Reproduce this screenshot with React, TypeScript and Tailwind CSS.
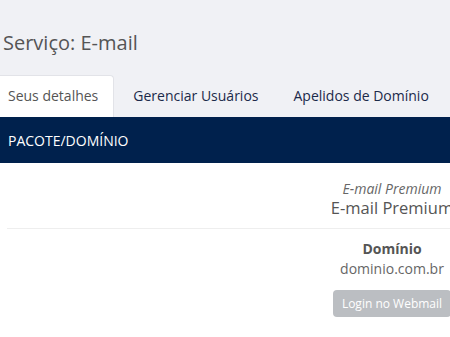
const tabs = ["Seus detalhes", "Gerenciar Usuários", "Apelidos de Domínio"];

export default function App() {
  return (
    <div className="w-[450px] h-[337px] overflow-hidden bg-white font-['Open_Sans',sans-serif]">
      <div className="w-[820px]">
        <div className="bg-[#f0f1f5] pt-[29px]">
          <h1 className="pl-[3px] text-[20px] leading-[28px] text-[#555]">
            Serviço: E-mail
          </h1>
          <ul className="mt-[18px] flex -ml-[7px] text-[14px] leading-[20px]">
            {tabs.map((t, i) => (
              <li
                key={t}
                className={
                  i === 0
                    ? "px-[15px] pt-[10px] pb-[11px] bg-white text-[#555] border-t border-r border-[#e2e3e8] rounded-tr-[4px] mr-[4px]"
                    : "px-[15px] py-[11px] text-[#1b2a4a] mr-[5px]"
                }
              >
                {t}
              </li>
            ))}
          </ul>
        </div>
        <div className="h-[46px] bg-[#00214d] flex items-center pl-[8px] text-white text-[14px]">
          PACOTE/DOMÍNIO
        </div>
        <div className="ml-[7px] pt-[17px]">
          <div className="grid grid-cols-[265px_240px] pb-[10px] border-b border-[#eeeeee]">
            <div />
            <div className="text-center text-[#666]">
              <p className="italic text-[14px] leading-[18px]">E-mail Premium</p>
              <p className="text-[16.5px] leading-[20px] text-[#555] whitespace-nowrap">E-mail Premium</p>
            </div>
          </div>
          <div className="grid grid-cols-[265px_240px] pt-[10px]">
            <div />
            <div className="flex flex-col items-center text-[#666]">
              <p className="font-bold text-[14px] leading-[20px] text-[#555]">Domínio</p>
              <p className="text-[14px] leading-[20px]">dominio.com.br</p>
              <button className="mt-[11px] h-[27px] px-[9px] rounded-[4px] bg-[#bbbec2] text-white text-[12px]">
                Login no Webmail
              </button>
            </div>
          </div>
        </div>
      </div>
    </div>
  );
}
